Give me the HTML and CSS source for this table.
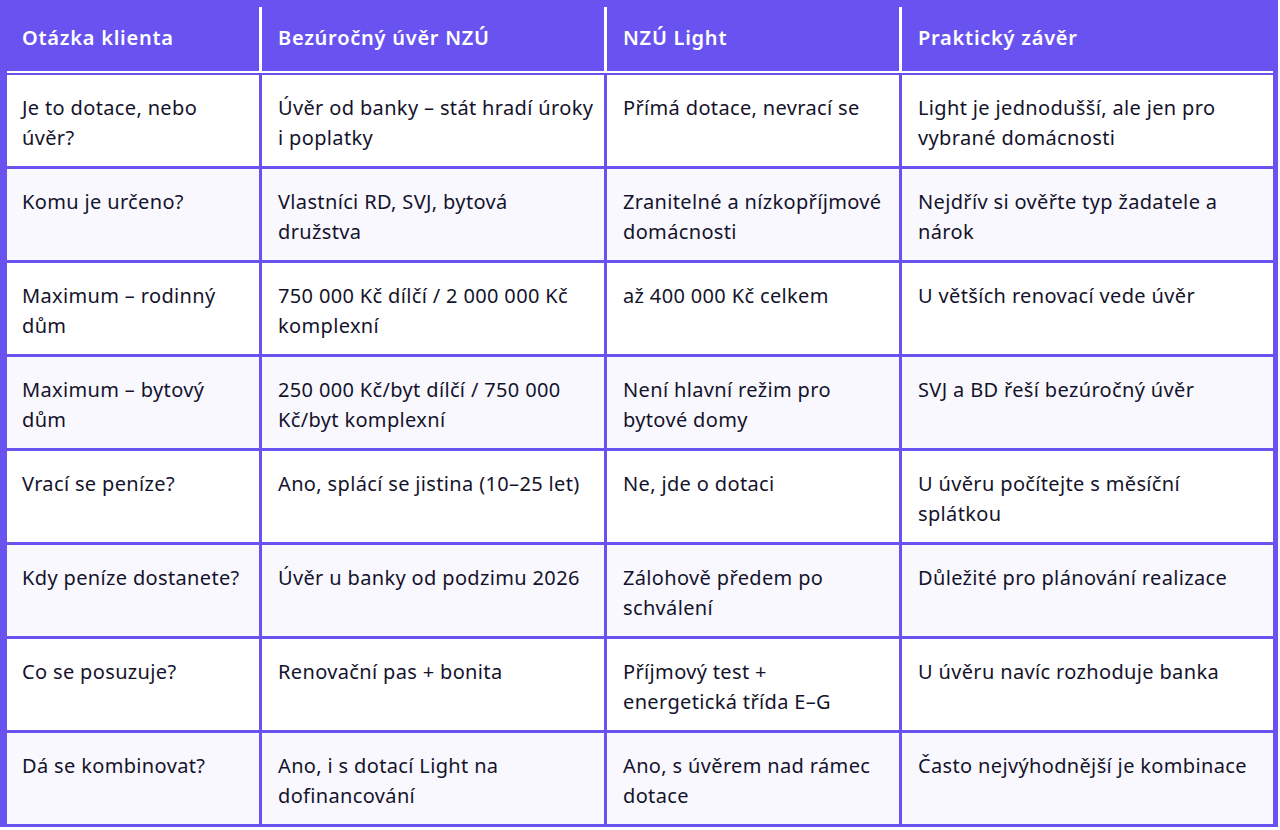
FILE: index.html
```html
<!DOCTYPE html>
<html lang="cs">
<head>
<meta charset="utf-8">
<title>NZÚ srovnání</title>
<link rel="stylesheet" href="styles.css">
</head>
<body>
<table class="cmp">
  <colgroup>
    <col class="c1"><col class="c2"><col class="c3"><col class="c4">
  </colgroup>
  <thead>
    <tr>
      <th>Otázka klienta</th>
      <th>Bezúročný úvěr NZÚ</th>
      <th>NZÚ Light</th>
      <th>Praktický závěr</th>
    </tr>
  </thead>
  <tbody>
    <tr>
      <td>Je to dotace, nebo úvěr?</td>
      <td>Úvěr od banky – stát hradí úroky i poplatky</td>
      <td>Přímá dotace, nevrací se</td>
      <td>Light je jednodušší, ale jen pro vybrané domácnosti</td>
    </tr>
    <tr>
      <td>Komu je určeno?</td>
      <td>Vlastníci RD, SVJ, bytová družstva</td>
      <td>Zranitelné a nízkopříjmové domácnosti</td>
      <td>Nejdřív si ověřte typ žadatele a nárok</td>
    </tr>
    <tr>
      <td>Maximum – rodinný dům</td>
      <td>750 000 Kč dílčí / 2 000 000 Kč komplexní</td>
      <td>až 400 000 Kč celkem</td>
      <td>U větších renovací vede úvěr</td>
    </tr>
    <tr>
      <td>Maximum – bytový dům</td>
      <td>250 000 Kč/byt dílčí / 750 000 Kč/byt komplexní</td>
      <td>Není hlavní režim pro bytové domy</td>
      <td>SVJ a BD řeší bezúročný úvěr</td>
    </tr>
    <tr>
      <td>Vrací se peníze?</td>
      <td>Ano, splácí se jistina (10–25 let)</td>
      <td>Ne, jde o dotaci</td>
      <td>U úvěru počítejte s měsíční splátkou</td>
    </tr>
    <tr>
      <td>Kdy peníze dostanete?</td>
      <td>Úvěr u banky od podzimu 2026</td>
      <td>Zálohově předem po schválení</td>
      <td>Důležité pro plánování realizace</td>
    </tr>
    <tr>
      <td>Co se posuzuje?</td>
      <td>Renovační pas + bonita</td>
      <td>Příjmový test + energetická třída E–G</td>
      <td>U úvěru navíc rozhoduje banka</td>
    </tr>
    <tr>
      <td>Dá se kombinovat?</td>
      <td>Ano, i s dotací Light na dofinancování</td>
      <td>Ano, s úvěrem nad rámec dotace</td>
      <td>Často nejvýhodnější je kombinace</td>
    </tr>
  </tbody>
</table>
</body>
</html>
```

FILE: styles.css
```css
html, body {
  margin: 0;
  padding: 0;
  background: #ffffff;
}

body {
  font-family: "Noto Sans", "Open Sans", sans-serif;
  color: #14132b;
}

.cmp {
  width: 1278px;
  border-collapse: separate;
  border-spacing: 0;
  table-layout: fixed;
  border-style: solid;
  border-color: #6953f0;
  border-width: 7px 5px 3px 7px;
  background: #6953f0;
}

.c1 { width: 255px; }
.c2 { width: 345px; }
.c3 { width: 295px; }
.c4 { width: auto; }

.cmp th {
  height: 66px;
  padding: 0 16px 4px 16px;
  box-sizing: border-box;
  text-align: left;
  vertical-align: middle;
  font-size: 20px;
  font-weight: 600;
  letter-spacing: 0.75px;
  color: #ffffff;
  background: #6953f0;
  border-right: 3px solid #ffffff;
  border-bottom: 2px solid #ffffff;
}

.cmp th:first-child,
.cmp td:first-child {
  padding-left: 15px;
}

.cmp th:last-child {
  border-right: none;
}

.cmp td {
  height: 94px;
  box-sizing: border-box;
  padding: 18px 16px 13px 16px;
  vertical-align: top;
  font-size: 20px;
  line-height: 30px;
  letter-spacing: 0.35px;
  background: #ffffff;
  border-right: 3px solid #6953f0;
  border-top: 3px solid #6953f0;
}

.cmp td:nth-child(2) {
  padding-right: 8px;
}

.cmp td:last-child {
  border-right: none;
}

.cmp tbody tr:first-child td {
  border-top-width: 2px;
  height: 92px;
}

.cmp tbody tr:nth-child(even) td {
  background: #f9f8ff;
}
```
